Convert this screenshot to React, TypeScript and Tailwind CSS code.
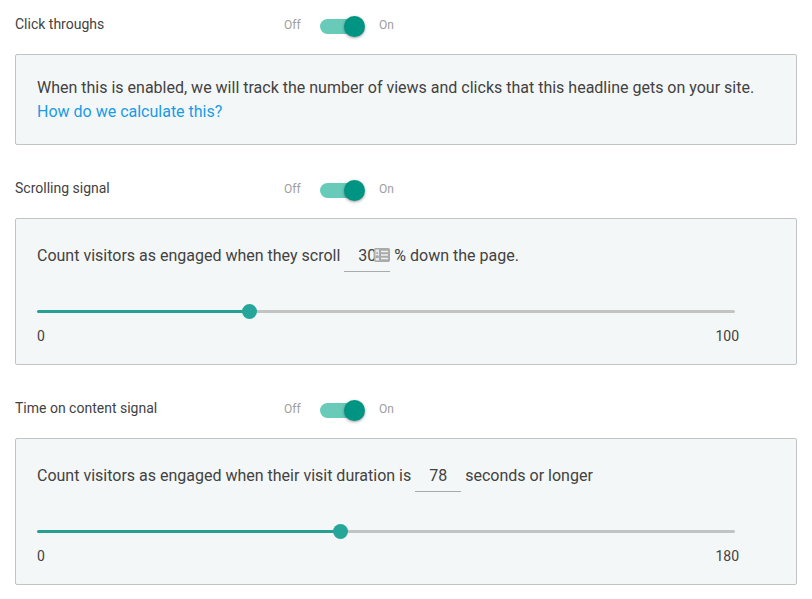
import { useState } from "react";
import type { ReactNode } from "react";

type SignalProps = {
  id: string;
  title: string;
  children: ReactNode;
};

const Signal = ({ id, title, children }: SignalProps) => {
  const [enabled, setEnabled] = useState(true);

  return (
    <section>
      <div className="flex h-[54px] items-start pt-[14px]">
        <label htmlFor={id} className="w-[269px] text-sm text-[#424242]">
          {title}
        </label>
        <div className="flex h-6 items-center text-xs text-[#9e9e9e]">
          <span className="w-9 pb-0.5">Off</span>
          <input
            id={id}
            type="checkbox"
            role="switch"
            checked={enabled}
            onChange={(e) => setEnabled(e.target.checked)}
            className="mr-4 flex h-[15px] w-[43px] cursor-pointer appearance-none items-center rounded-full bg-[#818181] before:size-[21px] before:shrink-0 before:rounded-full before:bg-[#f1f1f1] before:shadow-[0_1px_3px_rgba(0,0,0,0.4)] checked:bg-[#68cbb9] checked:before:ml-6 checked:before:bg-[#009583]"
          />
          <span className="pb-0.5">On</span>
        </div>
      </div>
      {children}
    </section>
  );
};

type NumberFieldProps = {
  label: string;
  value: number;
  max: number;
  onChange: (value: number) => void;
  icon?: ReactNode;
};

const NumberField = ({ label, value, max, onChange, icon }: NumberFieldProps) => (
  <span className="relative mx-1 inline-flex">
    <input
      type="text"
      inputMode="numeric"
      aria-label={label}
      value={value}
      onChange={(e) => onChange(Math.min(max, Number(e.target.value) || 0))}
      className="h-[33px] w-[46px] border-b border-[#a9abab] text-center focus:outline-none"
    />
    {icon}
  </span>
);

const ContactCardIcon = () => (
  <svg
    viewBox="0 0 16 14"
    className="absolute top-[9px] right-0 h-[14px] w-4"
    aria-hidden="true"
  >
    <rect x="0.75" y="0.75" width="14.5" height="12.5" rx="1" fill="#e9ebeb" stroke="#a9aaaa" strokeWidth="1.5" />
    <rect x="5" y="1" width="10" height="12" fill="#a9aaaa" />
    <path d="M7 3.5h7M7 7h7M7 10.5h7" stroke="#eff1f1" strokeWidth="1.4" />
    <circle cx="3.2" cy="5" r="1.1" fill="#a9aaaa" />
    <path d="M1.5 10c0-4 3.5-4 3.5 0z" fill="#a9aaaa" />
  </svg>
);

type RangeProps = {
  label: string;
  value: number;
  max: number;
  onChange: (value: number) => void;
};

const Range = ({ label, value, max, onChange }: RangeProps) => {
  const percent = (value / max) * 100;

  return (
    <div className="mt-[38px] mr-9">
      <input
        type="range"
        aria-label={label}
        min={0}
        max={max}
        value={value}
        onChange={(e) => onChange(Number(e.target.value))}
        className="block h-[3px] w-[calc(100%-4px)] cursor-pointer appearance-none rounded-xs [&::-webkit-slider-thumb]:size-[15px] [&::-webkit-slider-thumb]:appearance-none [&::-webkit-slider-thumb]:rounded-full [&::-webkit-slider-thumb]:bg-[#26a69a]"
        style={{
          backgroundImage: `linear-gradient(to right, #26a092 ${percent}%, #c2c4c4 ${percent}%)`,
        }}
      />
      <div className="mt-[13px] flex justify-between text-sm text-[#424242]">
        <span>0</span>
        <span>{max}</span>
      </div>
    </div>
  );
};

const panel =
  "rounded-xs border border-[#c0c4c4] bg-[#f4f7f7] px-[21px] text-base text-[#424242]";

const App = () => {
  const [scroll, setScroll] = useState(30);
  const [seconds, setSeconds] = useState(78);

  return (
    <main className="flex flex-col gap-[19px] bg-white px-[15px] font-[Roboto,sans-serif]">
      <Signal id="clicks" title="Click throughs">
        <div className={`${panel} pt-[21px] pb-5`}>
          <p>
            When this is enabled, we will track the number of views and clicks
            that this headline gets on your site.
          </p>
          <a href="#calculation" className="text-[#1a9be6]">
            How do we calculate this?
          </a>
        </div>
      </Signal>

      <Signal id="scrolling" title="Scrolling signal">
        <div className={`${panel} pt-5 pb-[18px]`}>
          <div className="flex items-center">
            <span>Count visitors as engaged when they scroll</span>
            <NumberField
              label="Scroll percentage"
              value={scroll}
              max={100}
              onChange={setScroll}
              icon={<ContactCardIcon />}
            />
            <span>% down the page.</span>
          </div>
          <Range label="Scroll depth" value={scroll} max={100} onChange={setScroll} />
        </div>
      </Signal>

      <Signal id="duration" title="Time on content signal">
        <div className={`${panel} pt-5 pb-[18px]`}>
          <div className="flex items-center">
            <span>Count visitors as engaged when their visit duration is</span>
            <NumberField
              label="Visit duration in seconds"
              value={seconds}
              max={180}
              onChange={setSeconds}
            />
            <span>seconds or longer</span>
          </div>
          <Range label="Visit duration" value={seconds} max={180} onChange={setSeconds} />
        </div>
      </Signal>
    </main>
  );
};

export default App;
